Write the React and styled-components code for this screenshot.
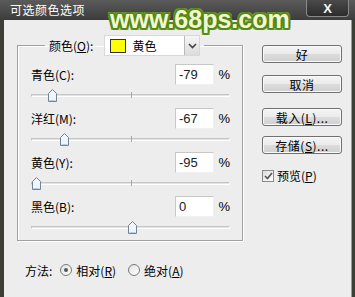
import React from 'react';
import styled, { createGlobalStyle } from 'styled-components';

const GlobalStyle = createGlobalStyle`
  html, body {
    margin: 0;
    padding: 0;
    width: 355px;
    height: 297px;
    overflow: hidden;
    background: #3b3f36;
  }
  * { box-sizing: border-box; }
`;

const Window = styled.div`
  position: relative;
  width: 355px;
  height: 297px;
  display: flex;
  flex-direction: column;
  font-family: "Noto Sans CJK SC", "Liberation Sans", sans-serif;
  font-size: 12px;
  color: #000;
`;

const TitleBar = styled.div`
  height: 20px;
  display: flex;
  align-items: flex-start;
  justify-content: space-between;
  padding-left: 10px;
  padding-right: 6px;
  background: linear-gradient(#5b5b5b, #3c3c3c);
  color: #fff;
`;

const Title = styled.span`
  line-height: 20px;
  font-size: 12px;
  letter-spacing: 0.5px;
`;

const CloseButton = styled.div`
  width: 43px;
  height: 17px;
  display: flex;
  align-items: center;
  justify-content: center;
  border: 1px solid #8a8a8a;
  border-top: none;
  border-radius: 0 0 4px 4px;
  background: linear-gradient(#4a4a4a, #2c2c2c);
  color: #f4f4f4;
  font-family: "Liberation Sans", sans-serif;
  font-weight: bold;
  font-size: 13px;
`;

const Watermark = styled.div`
  position: absolute;
  left: 110px;
  top: 4px;
  font-family: "Liberation Sans", sans-serif;
  font-weight: bold;
  font-size: 25px;
  line-height: 30px;
  color: #f1f8cf;
  text-shadow:
    -2px 0 #55861a, 2px 0 #55861a, 0 -2px #55861a, 0 2px #55861a,
    -1px -1px #55861a, 1px 1px #55861a, -1px 1px #55861a, 1px -1px #55861a,
    -2px -2px #6f9a2a, 2px 2px #6f9a2a, -2px 2px #6f9a2a, 2px -2px #6f9a2a;
  pointer-events: none;
`;

const Body = styled.div`
  flex: 1;
  display: flex;
  margin: 0 3px 0 4px;
  padding: 15px 0 0 13px;
  background: #ededed;
  border-right: 1px solid #9a9a9a;
`;

const LeftColumn = styled.div`
  width: 226px;
  display: flex;
  flex-direction: column;
`;

const RightColumn = styled.div`
  margin-left: 19px;
  padding-top: 10px;
  width: 80px;
  display: flex;
  flex-direction: column;
`;

const Group = styled.fieldset`
  margin: 0;
  padding: 8px 12px 0 13px;
  height: 206px;
  border: 1px solid #a0a0a0;
  box-shadow: 1px 1px 0 #fff, inset 1px 1px 0 #fff;
`;

const Legend = styled.legend`
  margin-left: 14px;
  padding: 0 4px;
  display: flex;
  align-items: center;
  gap: 11px;
`;

const Select = styled.div`
  width: 96px;
  height: 21px;
  display: flex;
  align-items: center;
  background: #fff;
  border: 1px solid #d8d8d8;
  padding-left: 5px;
`;

const Swatch = styled.span`
  width: 16px;
  height: 14px;
  background: ${(p) => p.color};
  border: 1px solid #333;
  margin-right: 6px;
`;

const SelectText = styled.span`
  flex: 1;
`;

const DropButton = styled.span`
  width: 15px;
  height: 19px;
  display: flex;
  align-items: center;
  justify-content: center;
  background: linear-gradient(#f6f6f6, #dcdcdc);
  border-left: 1px solid #b8b8b8;
`;

const Row = styled.div`
  display: flex;
  flex-direction: column;
`;

const FieldLine = styled.div`
  height: 21px;
  display: flex;
  align-items: center;
`;

const Label = styled.span`
  flex: 1;
`;

const ValueInput = styled.div`
  width: 39px;
  height: 21px;
  padding-left: 3px;
  display: flex;
  align-items: center;
  background: #fff;
  border: 1px solid #c8c8c8;
  border-right-color: #f0f0f0;
  border-bottom-color: #f0f0f0;
  font-family: "Liberation Sans", sans-serif;
  font-size: 13px;
  color: #222;
`;

const Percent = styled.span`
  width: 16px;
  text-align: right;
  font-family: "Liberation Sans", sans-serif;
  font-size: 13px;
`;

const Slider = styled.div`
  position: relative;
  height: 23px;
`;

const Track = styled.div`
  position: absolute;
  left: 0;
  right: 0;
  top: 9px;
  height: 3px;
  border: 1px solid #c4c4c4;
  border-bottom-color: #fff;
  border-right-color: #fff;
  background: #e4e4e4;
`;

const Tick = styled.div`
  position: absolute;
  left: 100px;
  top: 7px;
  width: 1px;
  height: 6px;
  background: #a8a8a8;
`;

const Thumb = styled.svg`
  position: absolute;
  top: 4px;
  margin-left: -4px;
`;

const MethodRow = styled.div`
  margin-top: 19px;
  padding-left: 8px;
  display: flex;
  align-items: center;
  height: 20px;
`;

const Radio = styled.span`
  width: 12px;
  height: 12px;
  border-radius: 50%;
  border: 1px solid #7a7a7a;
  background: linear-gradient(135deg, #e0e0e0, #fff);
  display: flex;
  align-items: center;
  justify-content: center;
  margin: 0 4px 0 ${(p) => p.offset}px;

  &::after {
    content: '';
    display: ${(p) => (p.checked ? 'block' : 'none')};
    width: 4px;
    height: 4px;
    border-radius: 50%;
    background: #555;
  }
`;

const Button = styled.div`
  height: 18px;
  margin-top: ${(p) => p.gap}px;
  display: flex;
  align-items: center;
  justify-content: center;
  border: 1px solid #707070;
  border-radius: 3px;
  background: linear-gradient(#f4f4f4 0%, #ebebeb 48%, #dcdcdc 52%, #d0d0d0 100%);
  box-shadow: inset 0 0 0 1px #fafafa;
  letter-spacing: 0.5px;
`;

const CheckLine = styled.label`
  margin-top: 13px;
  display: flex;
  align-items: center;
  gap: 3px;
`;

const Checkbox = styled.span`
  width: 12px;
  height: 12px;
  border: 1px solid #8a8a8a;
  background: linear-gradient(135deg, #dcdcdc, #fff);
  display: flex;
  align-items: center;
  justify-content: center;
`;

const channels = [
  { label: '青色(C):', value: -79 },
  { label: '洋红(M):', value: -67 },
  { label: '黄色(Y):', value: -95 },
  { label: '黑色(B):', value: 0 },
];

function Field({ label, value }) {
  const left = ((value + 100) / 200) * 201;
  return (
    <Row>
      <FieldLine>
        <Label>{label}</Label>
        <ValueInput>{value}</ValueInput>
        <Percent>%</Percent>
      </FieldLine>
      <Slider>
        <Track />
        <Tick />
        <Thumb width="9" height="13" viewBox="0 0 9 13" style={{ left }}>
          <path d="M0.5 12.5 V4.5 L4.5 0.5 L8.5 4.5 V12.5 Z" fill="#eef5fb" stroke="#6f8296" />
          <path d="M1.5 11.5 H7.5" stroke="#b9cde0" />
        </Thumb>
      </Slider>
    </Row>
  );
}

export default function App() {
  return (
    <Window>
      <GlobalStyle />
      <TitleBar>
        <Title>可选颜色选项</Title>
        <CloseButton>X</CloseButton>
      </TitleBar>
      <Body>
        <LeftColumn>
          <Group>
            <Legend>
              <span>颜色(<u>O</u>):</span>
              <Select>
                <Swatch color="#ffff00" />
                <SelectText>黄色</SelectText>
                <DropButton>
                  <svg width="9" height="6" viewBox="0 0 9 6">
                    <path d="M1 1 L4.5 4.5 L8 1" fill="none" stroke="#444" strokeWidth="1.6" />
                  </svg>
                </DropButton>
              </Select>
            </Legend>
            {channels.map((c) => (
              <Field key={c.label} label={c.label} value={c.value} />
            ))}
          </Group>
          <MethodRow>
            <span>方法:</span>
            <Radio offset={8} checked />
            <span>相对(<u>R</u>)</span>
            <Radio offset={12} />
            <span>绝对(<u>A</u>)</span>
          </MethodRow>
        </LeftColumn>
        <RightColumn>
          <Button gap={0}>好</Button>
          <Button gap={12}>取消</Button>
          <Button gap={15}>载入(<u>L</u>)...</Button>
          <Button gap={10}>存储(<u>S</u>)...</Button>
          <CheckLine>
            <Checkbox>
              <svg width="9" height="8" viewBox="0 0 9 8">
                <path d="M1 4 L3.5 6.5 L8 1" fill="none" stroke="#555" strokeWidth="1.6" />
              </svg>
            </Checkbox>
            <span>预览(<u>P</u>)</span>
          </CheckLine>
        </RightColumn>
      </Body>
      <Watermark>www.68ps.com</Watermark>
    </Window>
  );
}
